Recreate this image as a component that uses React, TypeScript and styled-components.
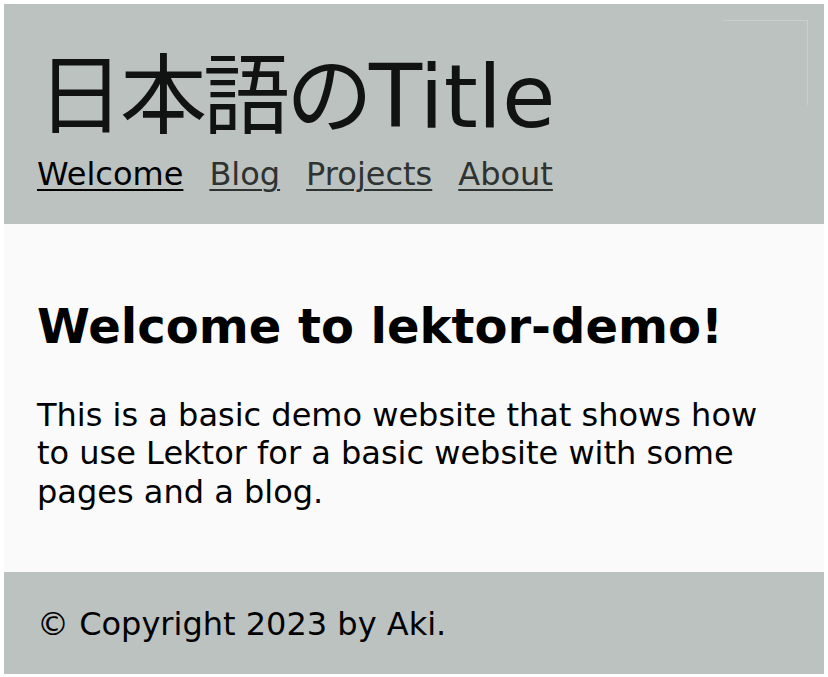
import React from "react";
import styled, { createGlobalStyle } from "styled-components";

const GlobalStyle = createGlobalStyle`
  html, body {
    margin: 0;
    padding: 0;
    background: #ffffff;
  }
  body {
    padding: 4px;
    font-family: "DejaVu Sans", "Noto Sans CJK JP", sans-serif;
    font-size: 32px;
    line-height: 1.2;
    color: #000;
  }
`;

const Page = styled.div`
  display: flex;
  flex-direction: column;
`;

const Header = styled.header`
  position: relative;
  background: #bcc2bf;
  padding: 50px 33px 31px;
`;

const Title = styled.h1`
  margin: 0;
  font-weight: normal;
  font-size: 87px;
  line-height: 87px;
  color: #111312;
`;

const Cjk = styled.span`
  letter-spacing: -4px;
`;

const Ghost = styled.div`
  position: absolute;
  top: 16px;
  right: 16px;
  width: 84px;
  height: 84px;
  border-top: 1px solid rgba(255, 255, 255, 0.22);
  border-right: 1px solid rgba(255, 255, 255, 0.22);
`;

const Nav = styled.nav`
  display: flex;
  gap: 26px;
  margin-top: 14px;
`;

const NavLink = styled.a<{ $active?: boolean }>`
  font-size: 32px;
  line-height: 38.4px;
  color: ${props => (props.$active ? "#000" : "#2e3331")};
  text-decoration: underline;
  text-decoration-thickness: 2px;
  text-underline-offset: 4px;
  cursor: pointer;
`;

const Main = styled.main`
  background: #fafafa;
  padding: 74px 33px 61px;
`;

const Heading = styled.h2`
  margin: 0 0 40px;
  font-size: 48px;
  line-height: 57.6px;
  font-weight: bold;
`;

const Text = styled.p`
  margin: 0;
  font-size: 32px;
  line-height: 38.4px;
`;

const Footer = styled.footer`
  background: #bcc2bf;
  padding: 33px 33px 30px;
  font-size: 32px;
  line-height: 38.4px;
`;

const links = ["Welcome", "Blog", "Projects", "About"];

const App: React.FC = () => {
  return (
    <Page>
      <GlobalStyle />
      <Header>
        <Ghost />
        <Title>
          <Cjk>日本語の</Cjk>Title
        </Title>
        <Nav>
          {links.map((l, i) => (
            <NavLink key={l} $active={i === 0}>
              {l}
            </NavLink>
          ))}
        </Nav>
      </Header>
      <Main>
        <Heading>Welcome to lektor-demo!</Heading>
        <Text>
          This is a basic demo website that shows how to use Lektor for a basic
          website with some pages and a blog.
        </Text>
      </Main>
      <Footer>© Copyright 2023 by Aki.</Footer>
    </Page>
  );
};

export default App;
